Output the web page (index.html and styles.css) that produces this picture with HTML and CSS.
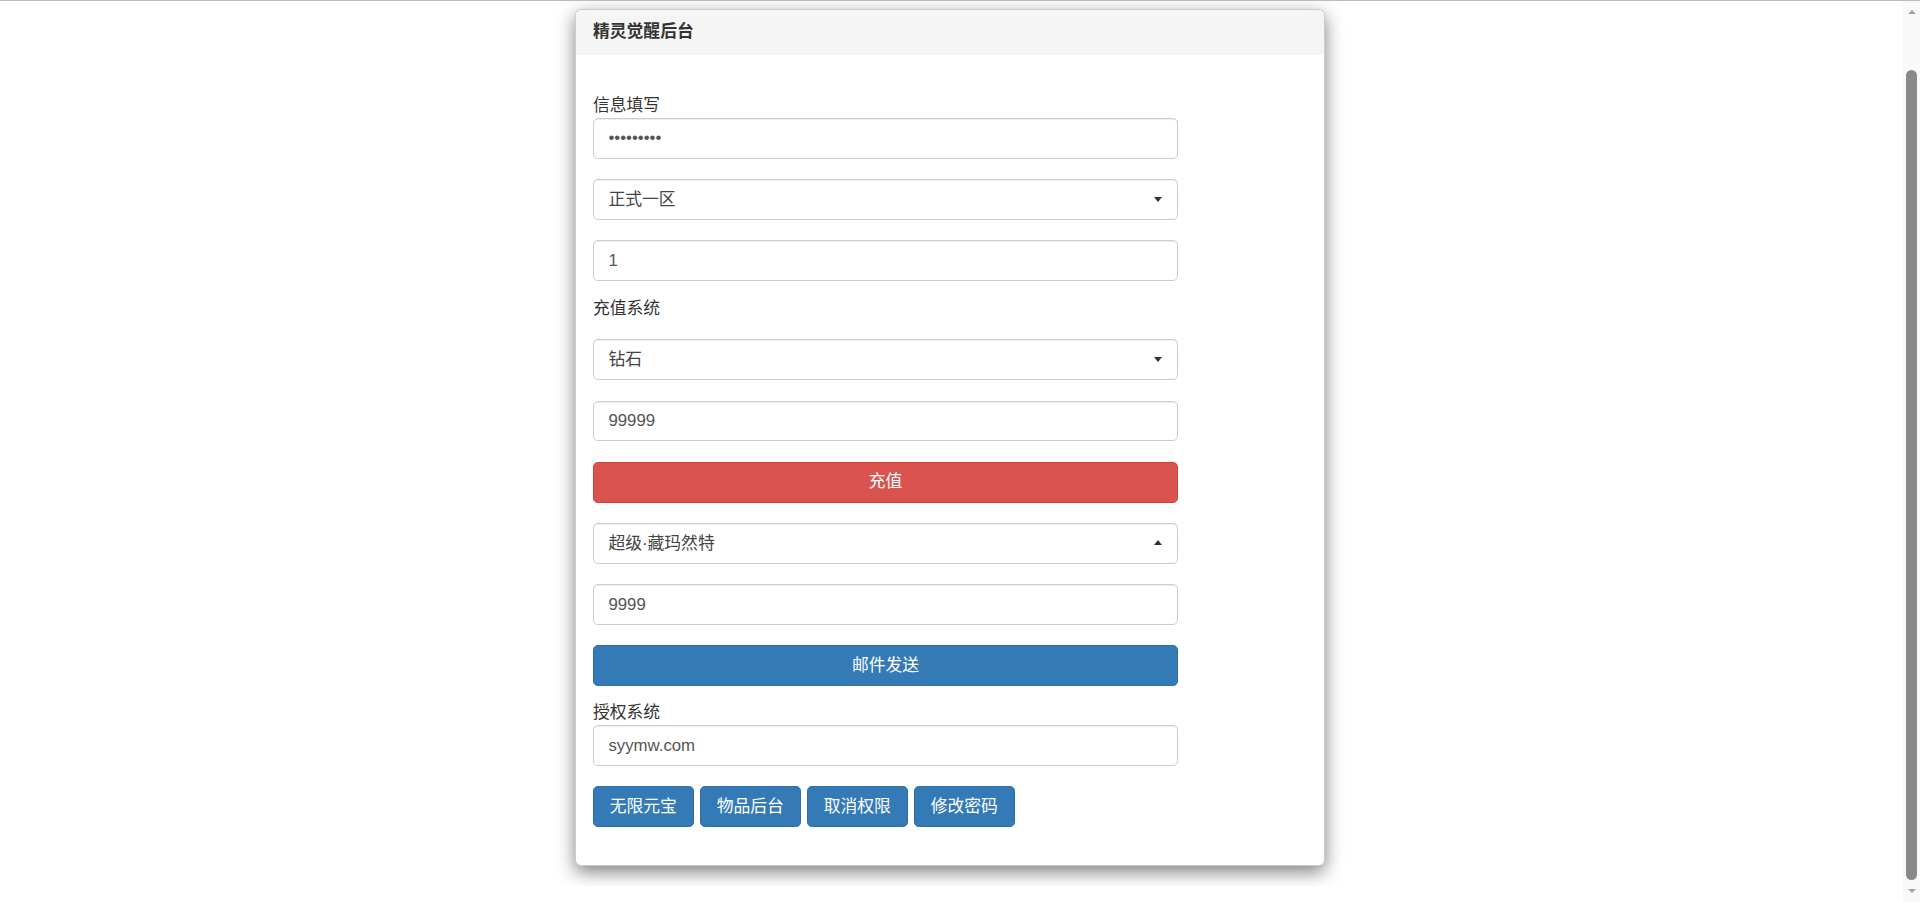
FILE: index.html
```html
<!DOCTYPE html>
<html lang="zh-CN">
<head>
<meta charset="utf-8">
<title>精灵觉醒后台</title>
<link rel="stylesheet" href="styles.css">
</head>
<body>
<div class="topline"></div>
<div class="scrollbar" aria-hidden="true">
  <span class="sb-arrow sb-up"></span>
  <span class="sb-thumb"></span>
  <span class="sb-arrow sb-down"></span>
</div>
<div class="page">
  <div class="panel">
    <div class="panel-heading">精灵觉醒后台</div>
    <div class="panel-body">
      <form class="form">
        <label class="label label-first">信息填写</label>
        <input class="control" type="password" value="123456789">
        <div class="select-wrap down"><select class="control select"><option>正式一区</option></select></div>
        <input class="control" type="text" value="1">
        <label class="label label-section">充值系统</label>
        <div class="select-wrap down"><select class="control select"><option>钻石</option></select></div>
        <input class="control" type="text" value="99999">
        <button type="button" class="btn btn-block btn-danger">充值</button>
        <div class="select-wrap up"><select class="control select"><option>超级·藏玛然特</option></select></div>
        <input class="control" type="text" value="9999">
        <button type="button" class="btn btn-block btn-primary">邮件发送</button>
        <label class="label label-auth">授权系统</label>
        <input class="control" type="text" value="syymw.com">
        <div class="btn-row">
          <button type="button" class="btn btn-primary btn-inline">无限元宝</button>
          <button type="button" class="btn btn-primary btn-inline">物品后台</button>
          <button type="button" class="btn btn-primary btn-inline">取消权限</button>
          <button type="button" class="btn btn-primary btn-inline">修改密码</button>
        </div>
      </form>
    </div>
  </div>
</div>
</body>
</html>
```

FILE: styles.css
```css
* { box-sizing: border-box; }

html, body {
  margin: 0;
  padding: 0;
  background: #fff;
}

body {
  font-family: "Liberation Sans", "Noto Sans CJK SC", sans-serif;
  font-size: 16.8px;
  line-height: 24px;
  color: #333;
}

.topline {
  position: fixed;
  top: 0;
  left: 0;
  right: 0;
  height: 1px;
  background: #bbbbbb;
  z-index: 10;
}

.scrollbar {
  position: fixed;
  top: 0;
  right: 0;
  bottom: 0;
  width: 17px;
  background: #f9f9f9;
  display: flex;
  flex-direction: column;
  align-items: center;
  z-index: 5;
}

.sb-arrow {
  width: 0;
  height: 0;
  border-left: 4px solid transparent;
  border-right: 4px solid transparent;
}

.sb-up {
  margin-top: 10px;
  border-bottom: 4px solid #a3a3a3;
}

.sb-thumb {
  margin-top: 56px;
  width: 11px;
  height: 810px;
  background: #898989;
  border-radius: 6px;
}

.sb-down {
  margin-top: 9px;
  border-top: 4px solid #a3a3a3;
}

.page {
  padding: 9px 20px 20px 0;
}

.panel {
  width: 750px;
  margin: 0 auto;
  background: #fff;
  border: 1px solid rgba(0, 0, 0, 0.2);
  border-radius: 6px;
  box-shadow: 0 6px 18px rgba(0, 0, 0, 0.5);
}

.panel-heading {
  height: 44.5px;
  line-height: 44.5px;
  padding: 0 17px;
  background: #f5f5f5;
  border-radius: 5px 5px 0 0;
  font-weight: bold;
  color: #333;
}

.panel-body {
  padding: 0 17px 37.5px;
}

.form {
  width: 585px;
  display: flex;
  flex-direction: column;
}

.label {
  display: block;
  height: 24px;
  line-height: 24px;
  color: #333;
}

.label-first { margin-top: 39.5px; }
.label-section { margin-top: -4.4px; margin-bottom: 18.3px; }
.label-auth { margin-top: -5.4px; }

.control {
  display: block;
  width: 100%;
  height: 40.8px;
  margin: 0 0 20.4px;
  padding: 0 14.4px;
  font-family: inherit;
  font-size: 16.8px;
  color: #555;
  background: #fff;
  border: 1.2px solid #ccc;
  border-radius: 4.8px;
  box-shadow: inset 0 1px 1px rgba(0, 0, 0, 0.075);
  outline: none;
}

.select-wrap {
  position: relative;
}

.select {
  -webkit-appearance: none;
  appearance: none;
  color: #444;
}

.select-wrap::after {
  content: "";
  position: absolute;
  right: 16px;
  top: 18px;
  width: 0;
  height: 0;
  border-left: 4.5px solid transparent;
  border-right: 4.5px solid transparent;
  pointer-events: none;
}

.select-wrap.down::after {
  border-top: 5px solid #333;
}

.select-wrap.up::after {
  top: 17px;
  border-bottom: 5px solid #333;
}

.btn {
  height: 40.8px;
  padding: 0 14.4px;
  font-family: inherit;
  font-size: 16.8px;
  line-height: 38px;
  color: #fff;
  border-radius: 4.8px;
  border: 1.2px solid transparent;
  cursor: pointer;
}

.btn-block {
  display: block;
  width: 100%;
  margin-bottom: 20.4px;
}

.btn-danger {
  background: #d9534f;
  border-color: #d43f3a;
}

.btn-primary {
  background: #337ab7;
  border-color: #2e6da4;
}

.btn-row {
  display: flex;
  gap: 6.5px;
}

.btn-inline {
  width: 100.5px;
  padding: 0;
}
```
